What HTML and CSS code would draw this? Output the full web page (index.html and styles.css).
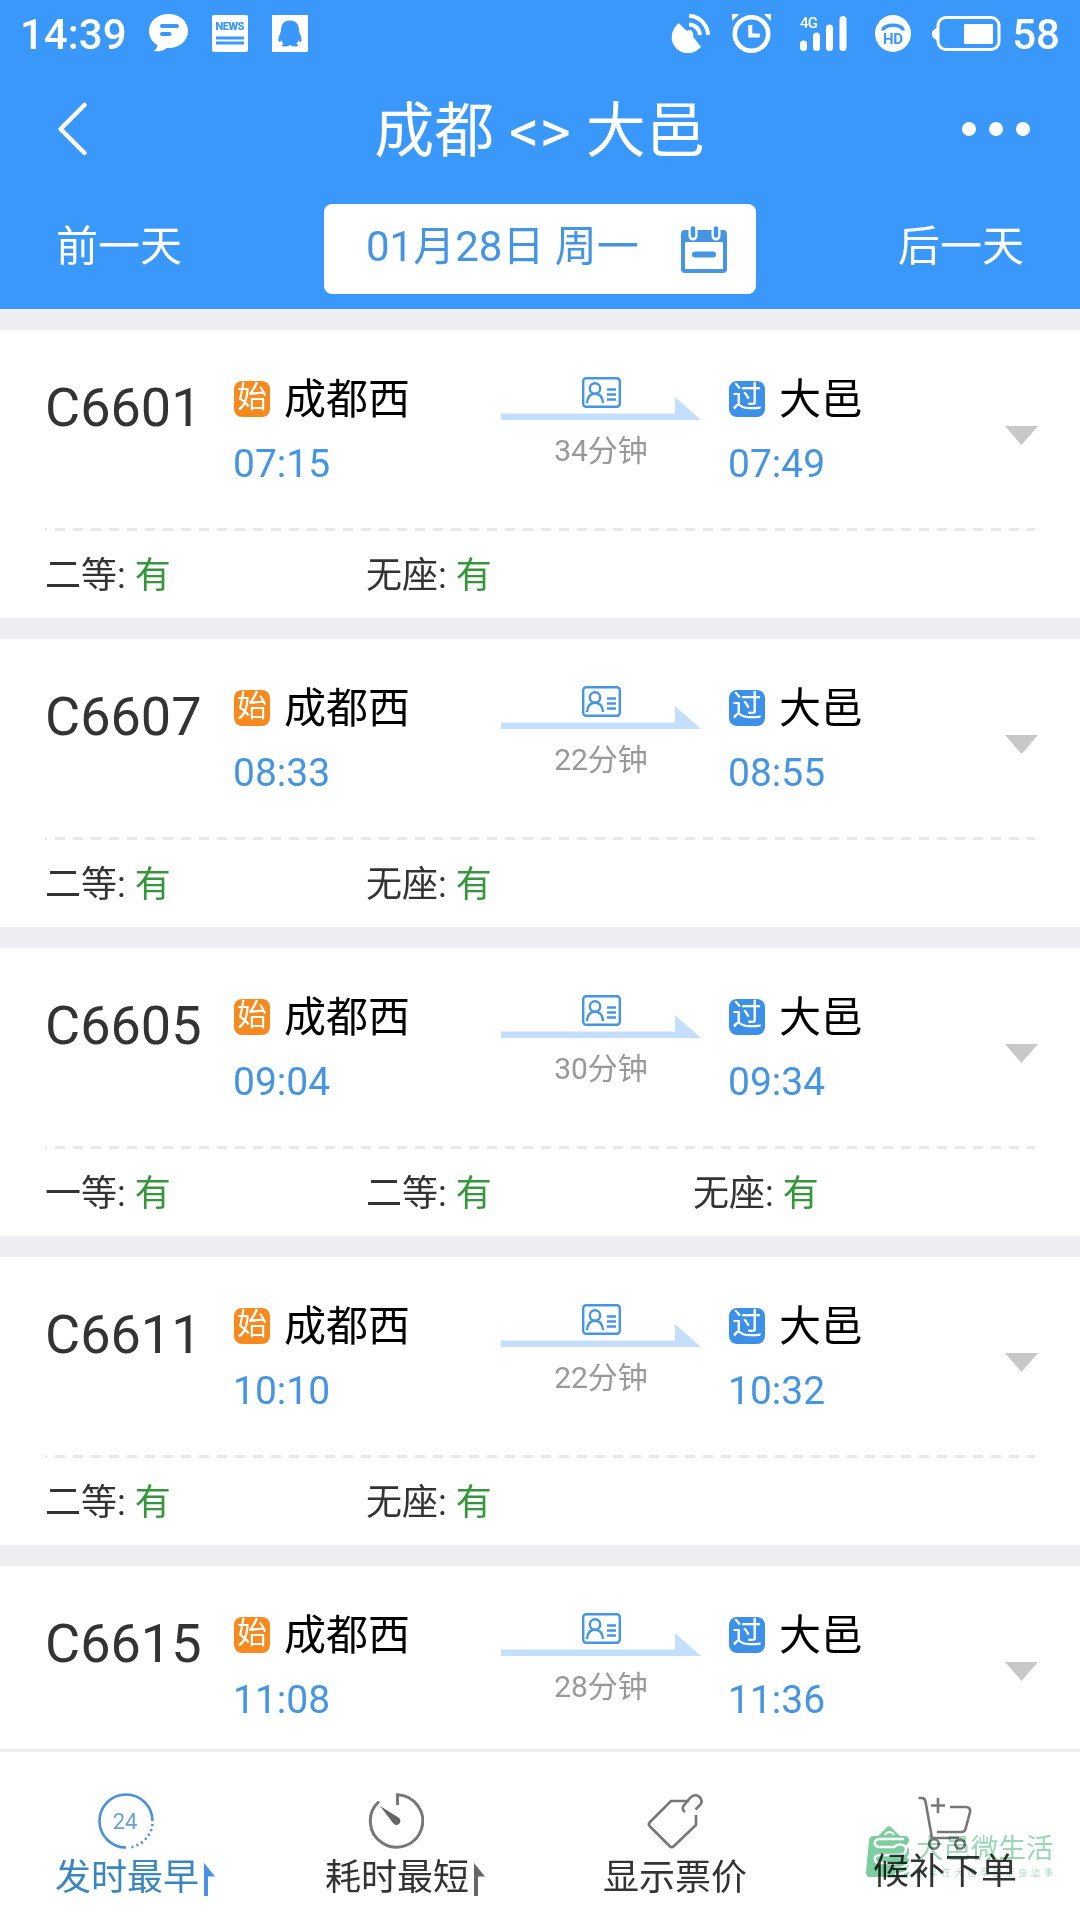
FILE: index.html
```html
<!DOCTYPE html>
<html lang="zh-CN">
<head>
  <meta charset="UTF-8">
  <meta name="viewport" content="width=device-width, initial-scale=1.0">
  <title>成都 - 大邑</title>
  <link rel="stylesheet" href="styles.css">
</head>
<body>
  <!-- Shared icons -->
  <svg class="sprite" width="0" height="0">
    <symbol id="id-card" viewBox="0 0 39 31">
      <rect x="1.2" y="1.2" width="36.6" height="28.6" rx="3"/>
      <circle cx="13" cy="11.500" r="5.200"/>
      <path d="M5 26c.5-6 3.500-9.300 8-9.300s7.500 3.300 8 9.300M25 12.500h9M25 17.500h9M25 22.500h9"/>
    </symbol>
    <symbol id="sort-up" viewBox="0 0 11 33">
      <path d="M0 0l11 13.500H4V33H0z"/>
    </symbol>
  </svg>

  <header class="header">
    <div class="status-bar">
      <div class="status-left">
        <span class="clock">14:39</span>
        <svg class="status-icon" width="39" height="38" viewBox="0 0 39 38">
          <path fill="#fff" d="M19.500 0C30.500 0 39 7.300 39 17S30.500 34 19.500 34l-1.800-.1C14.500 36.800 10 37.800 4.500 37c2.200-1.300 3.700-3.200 4-5.800C3.200 28 0 23 0 17 0 7.300 8.500 0 19.500 0z"/>
          <path stroke="#3b98fb" stroke-width="4" stroke-linecap="round" d="M13 12h15M13 20h7.500"/>
        </svg>
        <svg class="status-icon" width="36" height="37" viewBox="0 0 36 37">
          <rect width="36" height="37" rx="2" fill="#fff"/>
          <text class="news-text" x="18" y="15" text-anchor="middle" textLength="29">NEWS</text>
          <path stroke="#3b98fb" stroke-width="3" d="M4 23h28M4 28h28"/>
        </svg>
        <svg class="status-icon" width="36" height="37" viewBox="0 0 36 37">
          <rect width="36" height="37" rx="1" fill="#fff"/>
          <path fill="#3b98fb" d="M18 5.500c6 0 9 4 9 9.500 0 2 .8 3 1.700 5.500 1.300 3.500 1 6.500-.2 6.500-.8 0-1.500-1-2-2-.3 1.500-1 2.500-2 3.500 1.200.6 2.500 3 0 3-2.500.1-4.500-.2-6.500-1.500-2 1.300-4 1.600-6.500 1.500-2.500 0-1.200-2.400 0-3-1-1-1.700-2-2-3.500-.5 1-1.200 2-2 2-1.200 0-1.500-3-.2-6.500C8.200 18 9 17 9 15c0-5.500 3-9.500 9-9.500z"/>
        </svg>
      </div>
      <div class="status-right">
        <svg class="icon-dish" width="39" height="39" viewBox="0 0 39 39">
          <path fill="#fff" d="M7.500 9l8.500 8c3-2.500 7.500.5 6 5.500l8 10.500C22 42 10 40.500 4.500 33.500-1 27-1 17 7.500 9z"/>
          <path fill="none" stroke="#fff" stroke-width="4" d="M18 2c10 0 18.500 8 19 19M18 10.500c6 0 10.500 4.500 11 10.500"/>
        </svg>
        <svg class="icon-alarm" width="39" height="39" viewBox="0 0 39 39">
          <circle cx="19.500" cy="20" r="16.700" fill="none" stroke="#fff" stroke-width="4.600"/>
          <path fill="none" stroke="#fff" stroke-width="4" d="M18.300 11v10.500h9.500"/>
          <path fill="#fff" d="M0 0h7.500L0 7zM39 0h-7.500L39 7z"/>
        </svg>
        <svg class="icon-signal" width="47" height="37" viewBox="0 0 47 37">
          <text class="net-text" x="0" y="13" textLength="18">4G</text>
          <path stroke="#fff" stroke-width="7" stroke-linecap="round" d="M3.500 29v3.500M16.500 21v11.500M29.500 13v19.500M43 4.500v28"/>
        </svg>
        <svg class="icon-hd" width="36" height="37" viewBox="0 0 36 37">
          <ellipse cx="18" cy="18.500" rx="18" ry="18.500" fill="#fff"/>
          <path fill="none" stroke="#3b98fb" stroke-width="3.500" d="M8 15.500c0-7 20-7 20 0"/>
          <text class="hd-text" x="18" y="28.500" text-anchor="middle" textLength="20">HD</text>
        </svg>
        <svg class="icon-battery" width="69" height="35" viewBox="0 0 69 35">
          <path fill="#fff" d="M5 12v12C1 23 0 20.500 0 18s1-5 5-6z"/>
          <rect x="6" y="1.500" width="61" height="32" rx="8" fill="none" stroke="#fff" stroke-width="3"/>
          <rect x="32" y="8" width="29" height="20" rx="1" fill="#fff"/>
        </svg>
        <span class="battery-level">58</span>
      </div>
    </div>

    <div class="nav-bar">
      <svg class="back" width="32" height="56" viewBox="0 0 32 56">
        <path fill="none" stroke="#fff" stroke-width="4.500" stroke-linecap="round" stroke-linejoin="round" d="M28.500 4L4.500 28l24 24"/>
      </svg>
      <h1 class="title">成都 &lt;&gt; 大邑</h1>
      <div class="more"><i></i><i></i><i></i></div>
    </div>

    <div class="date-bar">
      <span class="day-link">前一天</span>
      <div class="date-box">
        <span>01月28日 周一</span>
        <svg width="46" height="47" viewBox="0 0 46 47">
          <rect x="2" y="6" width="42" height="39" rx="2" fill="none" stroke="#4595e3" stroke-width="4"/>
          <path fill="#4595e3" d="M2 5h42v11H2z"/>
          <path stroke="#fff" stroke-width="9" stroke-linecap="round" d="M12 3v7M35 3v7"/>
          <path stroke="#4595e3" stroke-width="4.500" stroke-linecap="round" d="M12 2.500v7M35 2.500v7"/>
          <path stroke="#4595e3" stroke-width="6" stroke-linecap="round" d="M14 28.500h18"/>
        </svg>
      </div>
      <span class="day-link">后一天</span>
    </div>
  </header>

  <main class="train-list" id="train-list"></main>

  <footer class="tab-bar">
    <div class="tab active">
      <svg class="tab-icon shifted" width="56" height="56" viewBox="0 0 56 56">
        <path d="M28 54.500A26.500 26.500 0 1 1 54.500 28"/>
        <path stroke-dasharray="2 3.200" d="M54.500 31A26.500 26.500 0 0 1 31 54.500"/>
        <text class="hours-text" x="27" y="36" text-anchor="middle">24</text>
      </svg>
      <div class="tab-label">发时最早<svg class="sort" width="11" height="33"><use href="#sort-up"/></svg></div>
    </div>
    <div class="tab">
      <svg class="tab-icon shifted" width="56" height="56" viewBox="0 0 56 56">
        <path stroke-width="3" d="M29.500 12V1.800A26.200 26.200 0 1 1 11 8.500"/>
        <path class="solid" d="M12 13l18.500 11.500a4 4 0 1 1-5.500 5.500z"/>
      </svg>
      <div class="tab-label">耗时最短<svg class="sort" width="11" height="33"><use href="#sort-up"/></svg></div>
    </div>
    <div class="tab">
      <svg class="tab-icon" width="56" height="56" viewBox="0 0 56 56">
        <path d="M42 8H24L3 29c-1.500 1.500-1.500 3 0 4.500L22.500 53c1.500 1.500 3 1.500 4.500 0L49 32V22"/>
        <path d="M38 19c-4-3-2-6 0-8l5-6c3-3.500 7-3.500 9.500-1 3 3 2.500 6 0 8.500l-4 4"/>
      </svg>
      <div class="tab-label">显示票价</div>
    </div>
    <div class="tab raised">
      <svg class="tab-icon" width="56" height="56" viewBox="0 0 56 56">
        <path d="M1.500 3H5c2 0 3 1.500 3.500 3.500L15 43h27M33 12h16c3 0 4.500 2 4 5l-4.500 17c-.5 2-1.500 3-4 3H20M21 3v15M14 10.500h14"/>
        <circle cx="17" cy="49" r="4.800"/>
        <circle cx="43" cy="49" r="4.800"/>
      </svg>
      <div class="tab-label">候补下单</div>
    </div>

    <div class="watermark">
      <svg width="45" height="52" viewBox="0 0 45 52">
        <path fill="#7ecda0" d="M7 10h5l9-9c1-1 3-1 4 0l9 9h5c4 0 5 4 3 7l-2 3 3 3v5l-2 3 2 3v5l-2 3 2 3c0 4-2 6-5 6H4c-3 0-4-2-4-5L3 14c0-2 2-4 4-4z"/>
        <path fill="none" stroke="#fff" stroke-width="2.500" stroke-linecap="round" d="M37 13H14c-7 0-7 8 0 8h14c4-4 12-3 12 2 0 6-5 6-10 6H14c-7 0-7 8 0 8h16M43 37c-5 5-8 5-13 5M43 44c-5 4-8 4-13 4"/>
        <path fill="none" stroke="#fff" stroke-width="2" d="M19 9c2-4 7-4 9 0"/>
      </svg>
      <div class="watermark-text">
        <b>大邑微生活</b>
        <small>乐享在大邑享生活身边事</small>
      </div>
    </div>
  </footer>

  <script src="trains.js"></script>
</body>
</html>
```
FILE: styles.css
```css
:root {
  --blue: #3b98fb;
  --text-blue: #4595e3;
  --gray-bg: #eeeef2;
}

* {
  box-sizing: border-box;
}

body {
  margin: 0;
  width: 1080px;
  height: 1920px;
  overflow: hidden;
  display: flex;
  flex-direction: column;
  background: var(--gray-bg);
  color: #333;
  font-family: Roboto, "Noto Sans CJK SC", sans-serif;
}

svg {
  display: block;
  flex: none;
}

.sprite {
  position: absolute;
}

/* Header */
.header {
  flex: none;
  height: 309px;
  background: var(--blue);
  color: #fff;
}

.status-bar {
  height: 66px;
  padding: 0 20px;
  display: flex;
  justify-content: space-between;
  align-items: center;
}

.status-left,
.status-right {
  display: flex;
  align-items: center;
}

.clock,
.battery-level {
  padding-top: 3px;
  font-size: 42px;
  line-height: 66px;
  font-weight: 500;
}

.status-icon {
  margin-left: 24px;
}

.clock + .status-icon {
  margin-left: 22px;
}

.news-text {
  font-size: 11px;
  font-weight: 900;
  fill: #3b98fb;
}

.net-text {
  font-size: 15px;
  font-weight: 500;
  fill: #fff;
}

.hd-text {
  font-size: 15px;
  font-weight: 700;
  fill: #3b98fb;
}

.icon-alarm {
  margin-left: 22px;
}

.icon-signal {
  margin-left: 29px;
}

.icon-hd {
  margin-left: 28px;
}

.icon-battery {
  margin-left: 21px;
  margin-right: 11px;
}

.nav-bar {
  height: 126px;
  padding: 0 50px 0 56px;
  display: grid;
  grid-template-columns: 55px 1fr 61px;
  align-items: center;
}

.title {
  margin: 0;
  padding-top: 6px;
  font-size: 60px;
  line-height: 80px;
  font-weight: 400;
  text-align: center;
}

.more {
  display: flex;
  justify-content: flex-end;
  gap: 13px;
}

.more i {
  flex: none;
  width: 14px;
  height: 14px;
  border-radius: 50%;
  background: #fff;
}

.date-bar {
  margin-top: 12px;
  padding: 0 56px;
  display: flex;
  justify-content: space-between;
  align-items: center;
  font-size: 42px;
}

.day-link {
  line-height: 60px;
  padding-bottom: 5px;
}

.date-box {
  width: 432px;
  height: 90px;
  padding: 0 29px 0 42px;
  display: flex;
  justify-content: space-between;
  align-items: center;
  border-radius: 8px;
  background: #fff;
  color: var(--text-blue);
}

.date-box span {
  line-height: 60px;
  padding-bottom: 5px;
}

/* Train cards */
.train-list {
  flex: 1;
  min-height: 0;
  overflow: hidden;
  padding-top: 21px;
}

.train {
  height: 288px;
  margin-bottom: 21px;
  padding: 0 45px;
  background: #fff;
}

.train-main {
  height: 198px;
  display: flex;
}

.train-no {
  width: 188px;
  padding-top: 46px;
  font-size: 54px;
  line-height: 64px;
}

.station {
  width: 267px;
  padding-top: 40px;
}

.station-name {
  display: flex;
  align-items: center;
  gap: 14px;
  height: 60px;
  padding-left: 1px;
  color: #000;
  font-size: 42px;
  line-height: 60px;
}

.badge {
  width: 36px;
  height: 36px;
  margin-bottom: 2px;
  border-radius: 8px;
  color: #fff;
  font-size: 30px;
  line-height: 32px;
  text-align: center;
}

.badge.start {
  background: #f68a1f;
}

.badge.pass {
  background: #3c90e8;
}

.time {
  padding-top: 11px;
  color: var(--text-blue);
  font-size: 39px;
  line-height: 46px;
}

.duration {
  width: 200px;
  margin-left: 1px;
  margin-right: 27px;
  padding-top: 47px;
  display: flex;
  flex-direction: column;
  align-items: center;
  color: #999;
  font-size: 30px;
  line-height: 44px;
}

.id-card {
  fill: none;
  stroke: var(--text-blue);
  stroke-width: 2.4;
  margin-bottom: -11px;
}

.arrow {
  fill: #c4dffb;
  margin-bottom: 9px;
}

.expand {
  margin: 96px -3px 0 auto;
  fill: #c8c8c8;
}

.divider {
  height: 3px;
  background: repeating-linear-gradient(to right, #e8e8e8 0 2px, transparent 2px 10px, #e8e8e8 10px 18px);
}

.seats {
  display: flex;
  padding-top: 19px;
  font-size: 36px;
  line-height: 52px;
}

.seat {
  width: 321px;
}

.seat + .seat {
  width: 327px;
}

.seat b {
  color: #36963c;
  font-weight: 400;
}

/* Bottom tabs */
.tab-bar {
  position: relative;
  flex: none;
  height: 171px;
  display: flex;
  border-top: 3px solid #ececec;
  background: #fff;
}

.tab {
  width: 270px;
  padding-top: 41px;
  display: flex;
  flex-direction: column;
  align-items: center;
}

.tab-icon {
  fill: none;
  stroke: #777;
  stroke-width: 2.6;
}

.tab-icon .solid {
  fill: #666;
  stroke: none;
}

.tab-icon.shifted {
  margin-right: 18px;
}

.tab-label {
  display: flex;
  align-items: center;
  font-size: 36px;
  line-height: 52px;
  margin-top: 3px;
}

.tab.raised .tab-icon {
  margin-top: 2px;
}

.tab.raised .tab-label {
  margin-top: -5px;
}

.sort {
  margin: 2px 0 0 5px;
  fill: #666;
}

.active .tab-icon {
  stroke: #4a8fe0;
}

.active .tab-label {
  color: #3a86c0;
}

.active .sort {
  fill: #4a90e8;
}

.hours-text {
  fill: #6a9fd0;
  stroke: none;
  font-size: 22px;
}

/* Publisher mark laid over the last tab */
.watermark {
  position: absolute;
  left: 866px;
  top: 74px;
  display: flex;
  mix-blend-mode: multiply;
  color: #9ad8b5;
}

.watermark-text {
  margin: 5px 0 0 5px;
  display: flex;
  flex-direction: column;
}

.watermark b {
  font-size: 27.5px;
  line-height: 36px;
  font-weight: 400;
}

.watermark small {
  font-size: 9px;
  line-height: 12px;
  letter-spacing: 3.8px;
  white-space: nowrap;
  opacity: 0.8;
}
```
FILE: trains.js
```js
const trains = [
  { no: 'C6601', depart: '07:15', arrive: '07:49', minutes: 34, seats: ['二等', '无座'] },
  { no: 'C6607', depart: '08:33', arrive: '08:55', minutes: 22, seats: ['二等', '无座'] },
  { no: 'C6605', depart: '09:04', arrive: '09:34', minutes: 30, seats: ['一等', '二等', '无座'] },
  { no: 'C6611', depart: '10:10', arrive: '10:32', minutes: 22, seats: ['二等', '无座'] },
  { no: 'C6615', depart: '11:08', arrive: '11:36', minutes: 28, seats: [] }
];

document.getElementById('train-list').innerHTML = trains.map(train => `
  <section class="train">
    <div class="train-main">
      <div class="train-no">${train.no}</div>
      <div class="station">
        <div class="station-name"><span class="badge start">始</span>成都西</div>
        <div class="time">${train.depart}</div>
      </div>
      <div class="duration">
        <svg class="id-card" width="39" height="31"><use href="#id-card"/></svg>
        <svg class="arrow" width="200" height="23" viewBox="0 0 200 23"><path d="M0 16.500h174V0l26 23H0z"/></svg>
        <span>${train.minutes}分钟</span>
      </div>
      <div class="station">
        <div class="station-name"><span class="badge pass">过</span>大邑</div>
        <div class="time">${train.arrive}</div>
      </div>
      <svg class="expand" width="33" height="19" viewBox="0 0 33 19"><path d="M0 0h33L16.500 19z"/></svg>
    </div>
    <div class="divider"></div>
    <div class="seats">
      ${train.seats.map(seat => `<span class="seat">${seat}: <b>有</b></span>`).join('')}
    </div>
  </section>
`).join('');
```
